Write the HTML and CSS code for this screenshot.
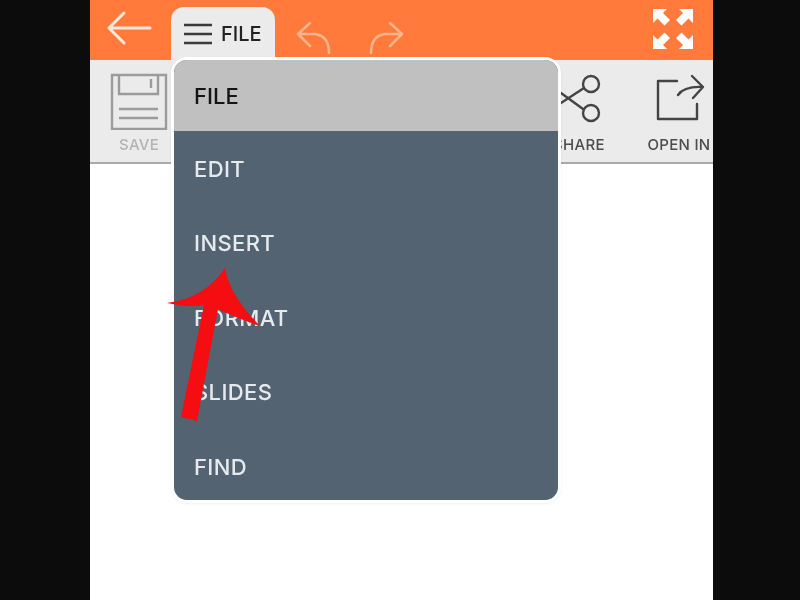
FILE: index.html
```html
<!DOCTYPE html>
<html lang="en">
<head>
<meta charset="utf-8">
<title>Presentation editor</title>
<link rel="stylesheet" href="styles.css">
</head>
<body>
<div class="app">
  <header class="header">
    <svg class="icon-back" width="48" height="40" viewBox="0 0 48 40"><path d="M46 20H5M20 5 5 20l15 15" /></svg>
    <div class="tab">
      <svg class="icon-menu" width="28" height="22" viewBox="0 0 28 22"><path d="M0 2h28M0 11h28M0 20h28" /></svg>
      <span>FILE</span>
    </div>
    <svg class="icon-undo" width="38" height="33" viewBox="0 0 38 33"><path d="M15 2 3 13l12 12M3 13h17q14 2 14 19" /></svg>
    <svg class="icon-redo" width="38" height="33" viewBox="0 0 38 33"><path d="M23 2l12 11-12 12M35 13H18Q4 15 4 32" /></svg>
    <svg class="icon-expand" width="44" height="44" viewBox="0 0 44 44">
      <path d="M2 2h14l-4 4 7 7-5.500 5.500-7-7L2 16zM42 2H28l4 4-7 7 5.500 5.500 7-7L42 16zM2 42h14l-4-4 7-7-5.500-5.500-7 7L2 28zM42 42H28l4-4-7-7 5.500-5.500 7 7L42 28z" />
    </svg>
  </header>
  <section class="toolbar">
    <div class="tool tool-muted">
      <svg width="58" height="58" viewBox="0 0 58 58"><path d="M2 3h54v54H2zM9 3v19h39V3M41 7v9M9 37h39M9 46h39" /></svg>
      <span>SAVE</span>
    </div>
    <div></div>
    <div class="tool">
      <svg width="60" height="58" viewBox="0 0 60 58"><circle cx="42" cy="12" r="8" /><circle cx="42" cy="41" r="8" /><path d="M35 16 12 31M34 37 12 21" /></svg>
      <span>SHARE</span>
    </div>
    <div class="tool">
      <svg width="60" height="58" viewBox="0 0 60 58"><path d="M28 9H9v38h39V32M29 23q6-9 25-8M43 4l11 11-10 11" /></svg>
      <span>OPEN IN</span>
    </div>
  </section>
  <main class="canvas"></main>
  <nav class="menu">
    <div class="menu-item menu-item-active">FILE</div>
    <div class="menu-list">
      <div class="menu-item">EDIT</div>
      <div class="menu-item">INSERT</div>
      <div class="menu-item">FORMAT</div>
      <div class="menu-item">SLIDES</div>
      <div class="menu-item">FIND</div>
    </div>
  </nav>
</div>
<svg class="pointer" width="800" height="600" viewBox="0 0 800 600"><path d="M181 417 204 305Q190 308 167 303 205 298 225 268 230 296 260 326 236 318 218 309L197 421Z" /></svg>
</body>
</html>
```
FILE: styles.css
```css
* {
  box-sizing: border-box;
}

html,
body {
  height: 100%;
}

body {
  margin: 0;
  padding-left: 90px;
  overflow: hidden;
  position: relative;
  background: #0c0c0c;
  font-family: Inter, "Liberation Sans", sans-serif;
}

.app {
  position: relative;
  display: flex;
  flex-direction: column;
  width: 623px;
  height: 600px;
  overflow: hidden;
  background: #fff;
  filter: blur(0.4px);
}

.header {
  display: flex;
  align-items: flex-start;
  flex: 0 0 60px;
  padding-left: 14px;
  background: #ff7a3b;
}

.header svg {
  fill: none;
  stroke-linecap: round;
  stroke-linejoin: round;
}

.icon-back {
  margin-top: 8px;
  stroke: #fde9dc;
  stroke-width: 3;
}

.tab {
  display: flex;
  align-items: center;
  gap: 9px;
  width: 104px;
  height: 53px;
  margin: 7px 0 0 19px;
  padding: 1px 0 0 13px;
  border-radius: 13px 13px 0 0;
  background: #ebebeb;
  color: #222;
  font-size: 20px;
  font-weight: 500;
}

.icon-menu {
  stroke: #3a3a3a;
  stroke-width: 2.4;
}

.icon-undo,
.icon-redo {
  margin-top: 21px;
  stroke: #fcb58c;
  stroke-width: 2.5;
}

.icon-undo {
  margin-left: 20px;
}

.icon-redo {
  margin-left: 34px;
}

.header .icon-expand {
  margin: 7px 18px 0 auto;
  fill: #fff;
}

.toolbar {
  display: grid;
  grid-template-columns: 98px 341px 100px 100px;
  flex: 0 0 104px;
  border-bottom: 2px solid #a9a9a9;
  background: #ebebeb;
}

.tool {
  display: flex;
  flex-direction: column;
  align-items: center;
  gap: 5px;
  padding-top: 12px;
  color: #4c4c4c;
  font-size: 15px;
  font-weight: 500;
  letter-spacing: 0.3px;
  white-space: nowrap;
}

.tool svg {
  fill: none;
  stroke: #444;
  stroke-width: 2.4;
  stroke-linecap: round;
  stroke-linejoin: round;
}

.tool-muted {
  color: #b3b3b3;
}

.tool-muted svg {
  stroke: #9b9b9b;
  stroke-linecap: butt;
  stroke-linejoin: miter;
}

.canvas {
  flex: 1;
}

.menu {
  position: absolute;
  top: 57px;
  left: 81px;
  display: flex;
  flex-direction: column;
  width: 390px;
  height: 446px;
  overflow: hidden;
  border: 3px solid #fff;
  border-radius: 16px;
  box-shadow: 0 1px 2px rgba(120, 130, 140, 0.12);
  background: #546372;
}

.menu-item {
  display: flex;
  align-items: center;
  flex: 0 0 74.5px;
  padding: 1px 0 0 20px;
  color: #e6eaed;
  font-size: 22px;
  font-weight: 500;
  letter-spacing: 0.4px;
}

.menu-item-active {
  flex-basis: 71px;
  background: #c0c0c0;
  color: #141414;
  letter-spacing: 0;
}

.menu-list {
  display: flex;
  flex-direction: column;
  flex: 1;
}

.pointer {
  position: absolute;
  top: 0;
  left: 0;
  fill: #f50d12;
}
```
